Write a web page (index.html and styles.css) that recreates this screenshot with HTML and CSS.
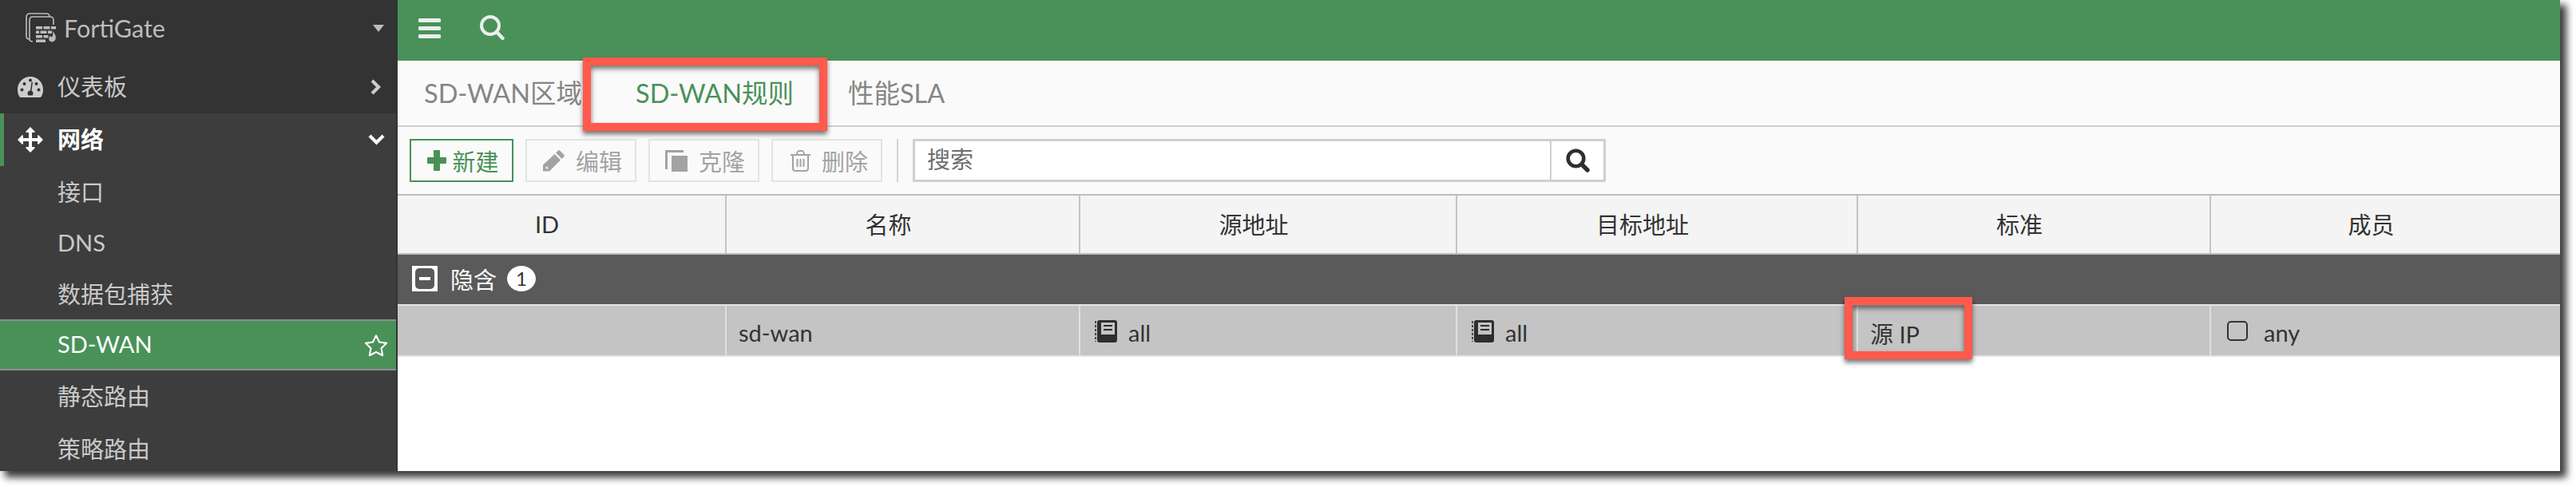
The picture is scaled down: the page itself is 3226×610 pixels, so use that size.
FILE: index.html
```html
<!DOCTYPE html>
<html lang="zh">
<head>
  <meta charset="UTF-8" />
  <title>FortiGate SD-WAN</title>
  <link rel="stylesheet" href="styles.css">
</head>
<body>
  <div class="window">
    <!-- Sidebar -->
    <nav class="sidebar">
      <div class="device">
        <svg class="device-logo" viewBox="0 0 39 38" fill="none" stroke="#bdbdbd" stroke-width="1.600">
          <path d="M5 33 C2 33 1 32 1 29 V6 C1 3 2 1 5 1 H26 C29 1 30 3 30 5"/>
          <path d="M9 36 C6 36 5 35 5 33 V10 C5 7 6 5 9 5 H31 C34 5 35 7 35 10 V15"/>
          <g fill="#bdbdbd" stroke="none">
            <rect x="13" y="17" width="8" height="3.500"/><rect x="22.500" y="17" width="8" height="3.500"/><rect x="32" y="17" width="6" height="3.500"/>
            <rect x="13" y="22.500" width="4" height="3.500"/><rect x="18.500" y="22.500" width="8" height="3.500"/><rect x="28" y="22.500" width="5" height="3.500"/>
            <rect x="13" y="28" width="8" height="3.500"/><rect x="22.500" y="28" width="6" height="3.500"/>
            <rect x="13" y="33.500" width="12" height="3.500"/>
            <path d="M34 23 C37 26 38.500 30 37.500 33 C36.500 36.500 32 37.500 30 35 C28.500 33 29.500 30 31.500 28.500 C31.500 30.500 32.500 31 33.500 30 C34.500 28.500 34.500 25.500 34 23Z"/>
          </g>
        </svg>
        <span class="device-name">FortiGate</span>
        <span class="device-caret"></span>
      </div>
      <a class="nav-item">
        <svg class="nav-icon" viewBox="0 0 32 26"><path fill="#cdcdcd" fill-rule="evenodd" d="M16 0C7 0 0 7 0 16c0 3 .6 6 2 8.500.5.900 1 1.500 2 1.500h24c1 0 1.500-.6 2-1.500 1.400-2.500 2-5.500 2-8.500C32 7 25 0 16 0ZM5.500 18.500a2 2 0 1 1 0-4 2 2 0 0 1 0 4Zm3-7.500a2 2 0 1 1 0-4 2 2 0 0 1 0 4ZM16 6.500a2 2 0 1 1 0-4 2 2 0 0 1 0 4Zm7.500 4.500a2 2 0 1 1 0-4 2 2 0 0 1 0 4Zm3 7.500a2 2 0 1 1 0-4 2 2 0 0 1 0 4ZM19 7l-1.500 10.500c1.500 1 2 2.300 2 3.500 0 1-.3 1.800-.8 2.500h-5.400c-.5-.7-.8-1.500-.8-2.500 0-2 1.500-3.500 3.500-3.700L17.500 6.500Z"/></svg>
        <span>仪表板</span>
        <svg class="nav-arrow" viewBox="0 0 14 20"><path fill="none" stroke="#cdcdcd" stroke-width="4.200" d="M2 2 10 10 2 18"/></svg>
      </a>
      <a class="nav-item open">
        <svg class="nav-icon" viewBox="0 0 32 32"><path fill="#fff" d="M16 0l6 6-1 1h-3v7h7V11l1-1 6 6-6 6-1-1v-3h-7v7h3l1 1-6 6-6-6 1-1h3v-7H7v3l-1 1-6-6 6-6 1 1v3h7V7h-3l-1-1z"/></svg>
        <span>网络</span>
        <svg class="nav-arrow down" viewBox="0 0 21 14"><path fill="none" stroke="#fff" stroke-width="4.200" d="M2 2 10.500 10.500 19 2"/></svg>
      </a>
      <a class="nav-item sub"><span>接口</span></a>
      <a class="nav-item sub short"><span>DNS</span></a>
      <a class="nav-item sub short"><span>数据包捕获</span></a>
      <a class="nav-item sub current">
        <span>SD-WAN</span>
        <svg class="star" viewBox="0 0 32 30"><path fill="none" stroke="#fff" stroke-width="2.200" stroke-linejoin="round" d="M16 2l4.300 8.800 9.700 1.400-7 6.800 1.700 9.600L16 24.100 7.300 28.600 9 19l-7-6.800 9.700-1.400z"/></svg>
      </a>
      <a class="nav-item sub"><span>静态路由</span></a>
      <a class="nav-item sub"><span>策略路由</span></a>
    </nav>

    <main class="main">
      <header class="topbar">
        <svg class="burger" viewBox="0 0 28 25"><path fill="#e9f0eb" d="M2 0h24a2 2 0 0 1 0 5H2a2 2 0 0 1 0-5Zm0 10h24a2 2 0 0 1 0 5H2a2 2 0 0 1 0-5Zm0 10h24a2 2 0 0 1 0 5H2a2 2 0 0 1 0-5Z"/></svg>
        <svg class="lens" viewBox="0 0 31 32"><circle cx="13" cy="13" r="11" fill="none" stroke="#e9f0eb" stroke-width="4"/><path stroke="#e9f0eb" stroke-width="4.400" stroke-linecap="round" d="M21 21l7.500 8"/></svg>
      </header>

      <div class="tabs">
        <span class="tab first">SD-WAN区域</span>
        <span class="tab active">SD-WAN规则</span>
        <span class="tab">性能SLA</span>
      </div>

      <div class="toolbar">
        <button class="btn btn-new">
          <svg viewBox="0 0 24 26"><path fill="#4a9159" d="M9 0h6a1 1 0 0 1 1 1v8h7a1 1 0 0 1 1 1v6a1 1 0 0 1-1 1h-7v8a1 1 0 0 1-1 1H9a1 1 0 0 1-1-1v-8H1a1 1 0 0 1-1-1v-6a1 1 0 0 1 1-1h7V1a1 1 0 0 1 1-1Z"/></svg>
          新建
        </button>
        <button class="btn">
          <svg viewBox="0 0 28 27"><path fill="#a3a3a3" d="M22 .6l5.500 5.300c.6.600.6 1.400 0 2l-3 3-7.400-7.300 3-3c.6-.6 1.400-.6 1.900 0ZM15.600 5.100l7.400 7.300L9 26.500H1v-8Zm-10 15.400-1.500 1.500 2 2 1.500-1.500z"/></svg>
          编辑
        </button>
        <button class="btn">
          <svg viewBox="0 0 28 27"><path fill="#a3a3a3" d="M0 0h23v3H3v21H0Zm8 7h20v20H8Z"/></svg>
          克隆
        </button>
        <button class="btn btn-del">
          <svg viewBox="0 0 25 27"><path fill="none" stroke="#a3a3a3" stroke-width="2" d="M0 6h25M3 6v17c0 2 1 3 3 3h13c2 0 3-1 3-3V6M7.500 6l1-3c.3-1 .9-2 2-2h4c1.100 0 1.700 1 2 2l1 3M8.500 11v10M12.500 11v10M16.500 11v10"/></svg>
          删除
        </button>
        <span class="toolbar-sep"></span>
        <div class="search">
          <span class="search-text">搜索</span>
          <span class="search-btn">
            <svg viewBox="0 0 30 30"><circle cx="12.500" cy="12.500" r="9.800" fill="none" stroke="#2e2e2e" stroke-width="4.600"/><path stroke="#2e2e2e" stroke-width="5.400" stroke-linecap="round" d="M20 20l7 7"/></svg>
          </span>
        </div>
      </div>

      <div class="table">
        <div class="row head">
          <div>ID</div><div>名称</div><div>源地址</div><div>目标地址</div><div>标准</div><div>成员</div>
        </div>
        <div class="group">
          <span class="collapse"><i></i></span>
          <span class="group-name">隐含</span>
          <span class="badge">1</span>
        </div>
        <div class="row data">
          <div></div>
          <div>sd-wan</div>
          <div><svg class="addr" viewBox="0 0 28 28"><path fill="#2e2e2e" fill-rule="evenodd" d="M6 0h19a3 3 0 0 1 3 3v22a3 3 0 0 1-3 3H6a3 3 0 0 1-3-3V3a3 3 0 0 1 3-3Zm2 3v15h17V3Zm3 3h11v2H11Zm0 5h11v2H11Z"/><path stroke="#2e2e2e" stroke-width="1.600" stroke-dasharray="3 2" d="M1 1v26"/></svg>all</div>
          <div><svg class="addr" viewBox="0 0 28 28"><path fill="#2e2e2e" fill-rule="evenodd" d="M6 0h19a3 3 0 0 1 3 3v22a3 3 0 0 1-3 3H6a3 3 0 0 1-3-3V3a3 3 0 0 1 3-3Zm2 3v15h17V3Zm3 3h11v2H11Zm0 5h11v2H11Z"/><path stroke="#2e2e2e" stroke-width="1.600" stroke-dasharray="3 2" d="M1 1v26"/></svg>all</div>
          <div>源 IP</div>
          <div><span class="member-box"></span>any</div>
        </div>
      </div>
    </main>

    <!-- red callouts -->
    <span class="callout callout-tab"></span>
    <span class="callout callout-ip"></span>
  </div>
</body>
</html>
```

FILE: styles.css
```css
* {
  margin: 0;
  padding: 0;
  box-sizing: border-box;
}

body {
  width: 3226px;
  height: 610px;
  background: #fff;
  overflow: hidden;
  font-family: Lato, "Noto Sans CJK SC", sans-serif;
}

.window {
  position: relative;
  display: flex;
  width: 3206px;
  height: 590px;
  box-shadow: 7px 7px 9px 1px #3c3c3c;
}

.sidebar {
  width: 498px;
  flex-shrink: 0;
  height: 590px;
  overflow: hidden;
  background: #333;
  color: #c9c9c9;
  font-size: 29px;
}

.device {
  display: flex;
  align-items: center;
  height: 76px;
  padding: 0 17px 6px 32px;
}

.device-logo {
  width: 39px;
  height: 38px;
  margin-right: 9px;
}

.device-name {
  flex: 1;
  color: #bdbdbd;
  font-size: 30.500px;
}

.device-caret {
  border: 7.500px solid transparent;
  border-top: 9px solid #bdbdbd;
  border-bottom: 0;
}

.nav-item {
  display: flex;
  align-items: center;
  height: 66px;
  width: 496px;
  padding: 0 18px 0 22px;
  background: #333;
}

.nav-item > span {
  flex: 1;
  margin-bottom: 4px;
}

.nav-icon {
  width: 32px;
  height: 32px;
  margin-right: 18px;
}

.nav-arrow {
  width: 14px;
  height: 20px;
}

.nav-arrow.down {
  width: 21px;
  height: 14px;
  margin-right: -4px;
}

.nav-item.open {
  background: #3d3d3d;
  border-left: 5px solid #4a9159;
  padding-left: 17px;
  color: #fff;
  font-weight: 700;
}

.nav-item.sub {
  background: #3d3d3d;
  padding-left: 72px;
}

.nav-item.short {
  height: 63px;
}

.nav-item.current {
  height: 64px;
  background: #4a9159;
  border-top: 2px solid #8e8e8e;
  border-bottom: 2px solid #8e8e8e;
  color: #fff;
  padding-right: 10px;
}

.star {
  width: 30px;
  height: 29px;
}

.main {
  flex: 1;
  min-width: 0;
  background: #fff;
}

.topbar {
  display: flex;
  align-items: center;
  height: 76px;
  background: #4a9159;
  padding: 0 0 6px 26px;
}

.burger {
  width: 28px;
  height: 25px;
  margin-right: 49px;
}

.lens {
  width: 31px;
  height: 32px;
}

.tabs {
  display: flex;
  align-items: center;
  height: 83px;
  padding: 0 0 4px 33px;
  background: #fafafa;
  border-bottom: 2px solid #cfcfcf;
  font-size: 32.500px;
  color: #858585;
}

.tab {
  margin-right: 68px;
}

.tab.first {
  width: 265px;
  margin-right: 0;
}

.tab.active {
  color: #4a9159;
}

.toolbar {
  display: flex;
  align-items: center;
  height: 84px;
  padding-left: 15px;
  background: #fafafa;
  gap: 15px;
}

.btn {
  display: flex;
  align-items: center;
  justify-content: center;
  gap: 14px;
  width: 139px;
  height: 54px;
  padding: 0 0 0 3px;
  border: 2px solid #e3e3e3;
  background: #fafafa;
  color: #a3a3a3;
  font-family: inherit;
  font-size: 29px;
}

.btn svg {
  width: 28px;
  height: 27px;
}

.btn-new {
  width: 130px;
  gap: 7px;
  padding-left: 4px;
  border-color: #4a9159;
  color: #4a9159;
}

.btn-new svg {
  width: 24px;
  height: 26px;
}

.btn-del {
  padding-left: 6px;
}

.btn-del svg {
  width: 25px;
}

.toolbar-sep {
  width: 2px;
  height: 54px;
  margin: 0 3px;
  background: #d4d4d4;
}

.search {
  display: flex;
  width: 868px;
  height: 54px;
  background: #fff;
  border: 3px solid #cfcfcf;
}

.search-text {
  flex: 1;
  padding-left: 15px;
  line-height: 46px;
  font-size: 29px;
  color: #6e6e6e;
}

.search-btn {
  display: flex;
  align-items: center;
  justify-content: center;
  width: 67px;
  border-left: 2px solid #cfcfcf;
}

.search-btn svg {
  width: 30px;
  height: 30px;
}

.table {
  font-size: 29px;
  color: #333;
}

.row {
  display: grid;
  grid-template-columns: 412px 443px 472px 502px 442px 437px;
}

.row.head {
  height: 76px;
  background: #f4f4f4;
  border-top: 2px solid #bdbdbd;
  border-bottom: 2px solid #bdbdbd;
}

.row.head > div {
  display: flex;
  align-items: center;
  justify-content: center;
  border-right: 2px solid #c4c4c4;
  padding: 0 36px 2px 0;
}

.row.head > div:last-child,
.row.data > div:last-child {
  border-right: 0;
}

.group {
  display: flex;
  align-items: center;
  height: 64px;
  padding: 0 0 2px 18px;
  background: #5a5a5a;
  border-bottom: 2px solid #e4e4e4;
  color: #fff;
}

.collapse {
  display: flex;
  align-items: center;
  justify-content: center;
  width: 32px;
  height: 32px;
  background: #fff;
  margin-right: 16px;
}

.collapse i {
  position: relative;
  display: block;
  width: 24px;
  height: 26px;
  border-radius: 5px;
  background: #5a5a5a;
}

.collapse i::after {
  content: "";
  position: absolute;
  left: 5px;
  top: 11px;
  width: 14px;
  height: 4px;
  background: #fff;
}

.group-name {
  margin-right: 13px;
}

.badge {
  width: 36px;
  height: 32px;
  border-radius: 50%;
  background: #fff;
  color: #333;
  font-size: 24px;
  line-height: 32px;
  text-align: center;
}

.row.data {
  height: 64px;
  background: #c4c4c4;
  border-bottom: 2px solid #e4e4e4;
}

.row.data > div {
  display: flex;
  align-items: center;
  padding: 5px 0 0 15px;
  border-right: 2px solid #e0e0e0;
}

.addr {
  width: 28px;
  height: 28px;
  margin: -3px 14px 0 3px;
}

.member-box {
  width: 26px;
  height: 25px;
  margin: -4px 20px 0 5px;
  border: 2px solid #333;
  border-radius: 5px;
}

.callout {
  position: absolute;
  border: 10px solid #ff5a4b;
  box-shadow: 0 4px 6px rgba(0, 0, 0, 0.55), inset 0 4px 6px rgba(0, 0, 0, 0.55);
}

.callout-tab {
  left: 730px;
  top: 72px;
  width: 306px;
  height: 92px;
}

.callout-ip {
  left: 2310px;
  top: 372px;
  width: 160px;
  height: 78px;
}
```
